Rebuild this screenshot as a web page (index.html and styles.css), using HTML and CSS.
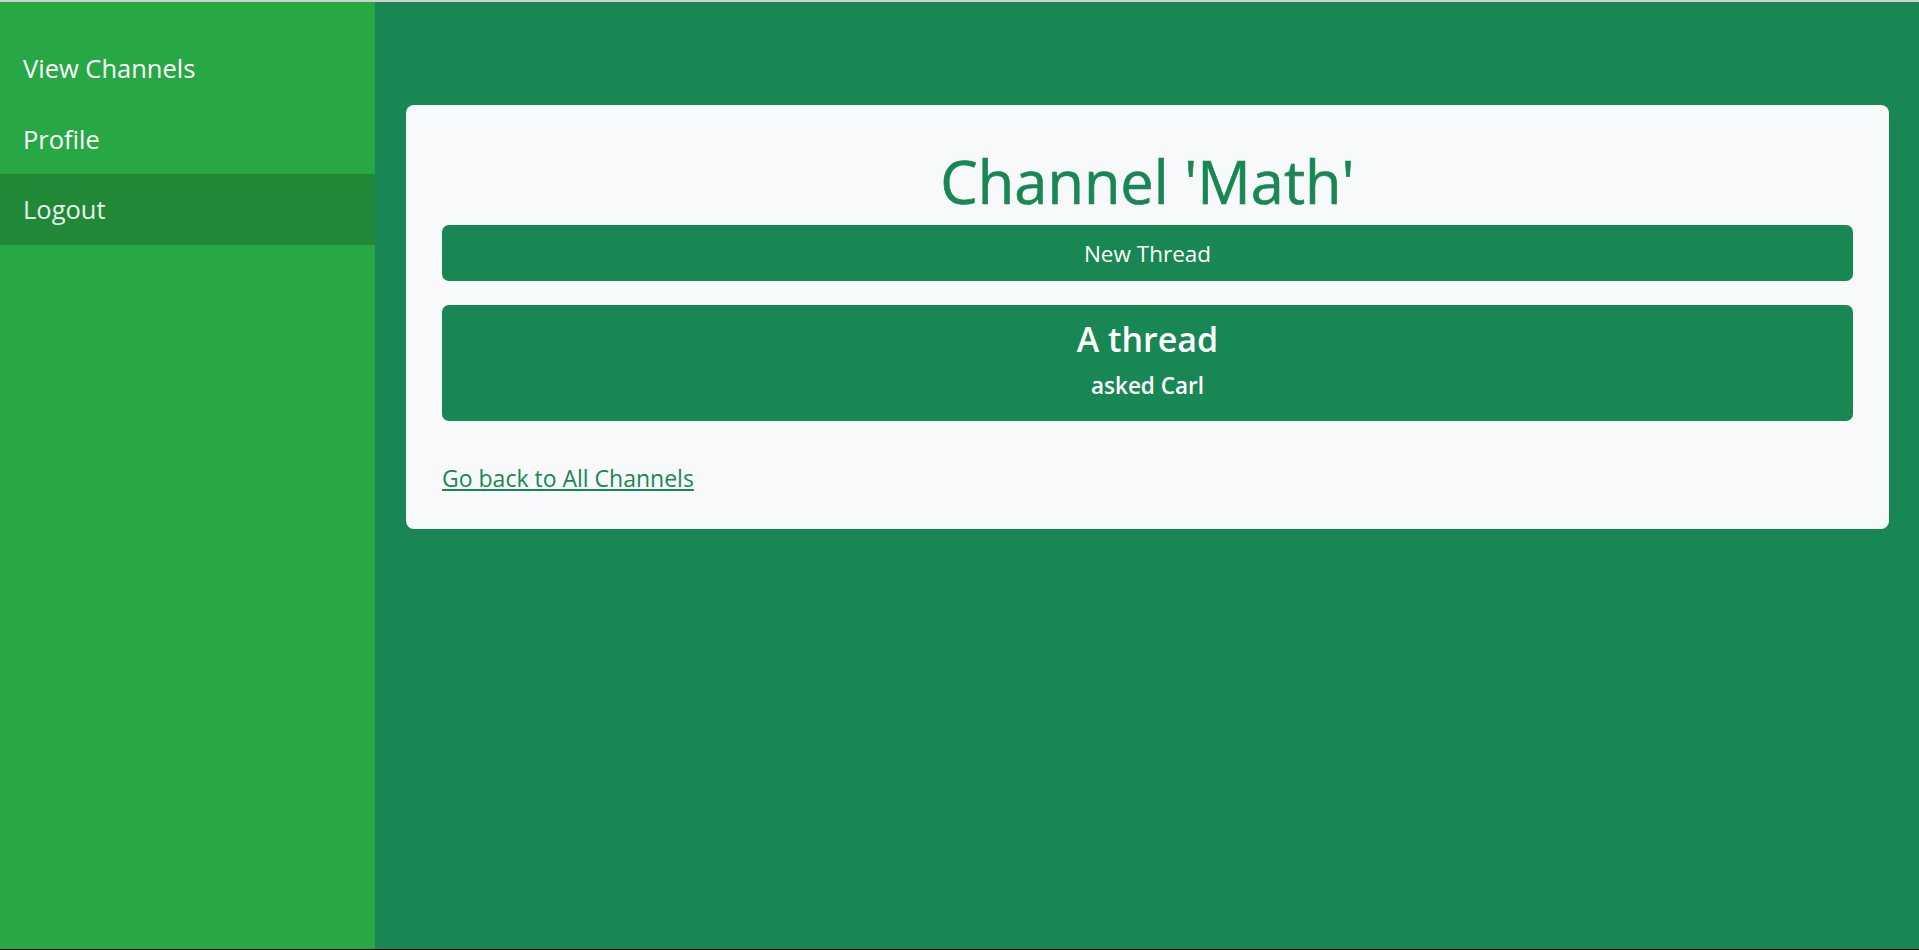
FILE: index.html
```html
<!DOCTYPE html>
<html>
<head>
<meta charset="utf-8">
<link rel="stylesheet" href="styles.css">
</head>
<body>
<div class="topline"></div>
<div class="app">
  <nav class="sidebar">
    <a class="nav-link" href="#">View Channels</a>
    <a class="nav-link" href="#">Profile</a>
    <a class="nav-link active" href="#">Logout</a>
  </nav>
  <main class="main">
    <section class="card">
      <h1 class="title">Channel 'Math'</h1>
      <a class="btn-new" href="#">New Thread</a>
      <a class="thread" href="#">
        <span class="thread-title">A thread</span>
        <span class="thread-meta">asked Carl</span>
      </a>
      <a class="back" href="#">Go back to All Channels</a>
    </section>
  </main>
</div>
<div class="bottomline"></div>
</body>
</html>
```
FILE: styles.css
```css
html, body {
  margin: 0;
  padding: 0;
}
body {
  height: 950px;
  display: flex;
  flex-direction: column;
  font-family: "Open Sans", "Noto Sans", sans-serif;
  overflow: hidden;
}
.topline {
  height: 2px;
  background: #cfd1d0;
  flex: none;
}
.bottomline {
  height: 1px;
  background: #000;
  flex: none;
}
.app {
  flex: 1;
  display: flex;
  min-height: 0;
}
.sidebar {
  width: 375px;
  flex: none;
  background: #28a745;
  display: flex;
  flex-direction: column;
  padding-top: 31px;
}
.nav-link {
  height: 70.5px;
  display: flex;
  align-items: center;
  padding-left: 23px;
  color: #fff;
  text-decoration: none;
  font-size: 25.5px;
}
.nav-link.active {
  background: #218838;
  color: #e6f2e8;
}
.main {
  flex: 1;
  background: #198754;
  padding: 103px 30px 0 31px;
}
.card {
  background: #f8f9fa;
  border-radius: 8px;
  padding: 36px 36px 36px;
  display: flex;
  flex-direction: column;
}
.title {
  margin: 0;
  text-align: center;
  color: #198754;
  font-weight: 500;
  font-size: 59.5px;
  line-height: 84px;
  margin-top: -2px;
  margin-bottom: 2px;
  -webkit-text-stroke: 0.6px #198754;
}
.btn-new {
  height: 56px;
  border-radius: 7px;
  background: #198754;
  color: #fff;
  text-decoration: none;
  font-size: 22.5px;
  display: flex;
  align-items: center;
  justify-content: center;
}
.thread {
  margin-top: 24px;
  height: 116px;
  box-sizing: border-box;
  padding-top: 11px;
  border-radius: 7px;
  background: #198754;
  color: #fff;
  text-decoration: none;
  display: flex;
  flex-direction: column;
  align-items: center;
  justify-content: flex-start;
  gap: 8.5px;
}
.thread-title {
  font-size: 34px;
  font-weight: 600;
  line-height: 46px;
}
.thread-meta {
  font-size: 22.5px;
  font-weight: 600;
  line-height: 30px;
}
.back {
  margin-top: 42px;
  align-self: flex-start;
  color: #198754;
  font-size: 23px;
  line-height: 30px;
}
```
